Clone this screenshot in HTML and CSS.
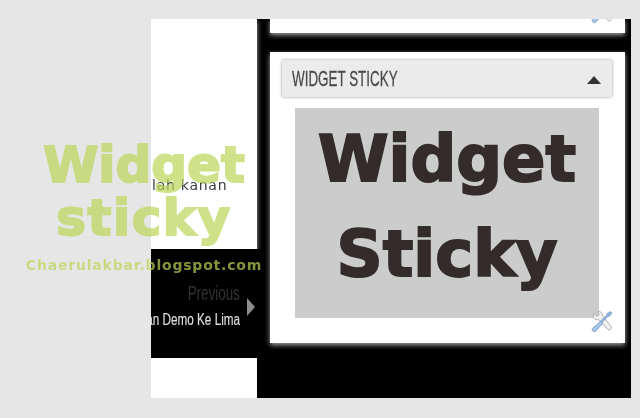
FILE: index.html
```html
<!DOCTYPE html>
<html lang="id">
<head>
<meta charset="utf-8">
<title>Widget sticky</title>
<link rel="stylesheet" href="styles.css">
</head>
<body>
<div class="stage">
  <div class="window">
    <div class="left">
      <div class="left-top"><span class="post-text">lah kanan</span></div>
      <div class="pager">
        <div class="pager-text">
          <div class="pager-line prev"><span>Previous</span></div>
          <div class="pager-line next-title"><span>an Demo Ke Lima</span></div>
        </div>
        <div class="pager-arrow"></div>
      </div>
      <div class="left-bottom"></div>
    </div>
    <div class="right">
      <div class="panel panel-top">
        <svg class="tools tools-top" viewBox="0 0 24 24"><use href="#tool"/></svg>
      </div>
      <div class="panel panel-main">
        <div class="widget-head">
          <span class="widget-title">WIDGET STICKY</span>
          <span class="caret"></span>
        </div>
        <div class="widget-image"><span>Widget</span><span>Sticky</span></div>
        <svg class="tools" viewBox="0 0 24 24">
          <g id="tool">
            <path d="M4 3.5 L7 6.5 L9.5 5 L8 2 C11 1 13.5 3 13 6 L22 17 C23 19 21 21.5 19 20.5 L9 10 C5.500 11 2.500 8 3.500 4.500Z" fill="#f0f0f0" stroke="#a8a8a8" stroke-width="1"/>
            <path d="M21.500 1.500 L23 3 L20.500 6.500 L18.500 7 L12 13.500 L10.500 12 L17 5.500 L18 3.500Z" fill="#8fb2dc" stroke="#7a9dca" stroke-width=".7"/>
            <path d="M11.500 11.500 L13.500 13.500 L6 22 C4.500 23.500 1.500 22 2.500 19.500Z" fill="#a9c5e8" stroke="#7a9dca" stroke-width="1"/>
          </g>
        </svg>
      </div>
    </div>
  </div>
  <div class="watermark">
    <div class="wm-big">Widget</div>
    <div class="wm-big">sticky</div>
    <div class="wm-small">Chaerulakbar.blogspot.com</div>
  </div>
</div>
</body>
</html>
```

FILE: styles.css
```css
html, body {
  margin: 0;
  padding: 0;
  height: 418px;
  overflow: hidden;
  background: #e6e6e6;
}
.stage {
  position: relative;
  width: 640px;
  height: 418px;
  padding: 19px 9px 20px 151px;
  box-sizing: border-box;
  background: #e6e6e6;
  filter: blur(0.5px);
}
.window {
  display: flex;
  width: 480px;
  height: 379px;
  background: #000;
  overflow: hidden;
}
.left {
  width: 106px;
  display: flex;
  flex-direction: column;
  flex: none;
}
.left-top {
  height: 230px;
  background: #fff;
  box-shadow: 0 2px 5px rgba(255,255,255,.7);
  box-sizing: border-box;
  padding-top: 157px;
}
.post-text {
  display: block;
  font: 14px/18px "DejaVu Sans", sans-serif;
  color: #3a3a44;
  white-space: nowrap;
  padding-left: 1px;
  letter-spacing: .75px;
}
.pager {
  width: 119px;
  height: 109px;
  display: flex;
  align-items: flex-start;
  background: #000;
  position: relative;
}
.pager-text {
  width: 89px;
  padding-top: 33px;
  overflow: hidden;
  flex: none;
  font-family: "Liberation Sans", sans-serif;
}
.pager-line {
  display: flex;
  justify-content: flex-end;
  white-space: nowrap;
}
.pager-line span {
  flex: none;
  transform-origin: right center;
}
.prev {
  font-size: 20px;
  line-height: 22px;
  color: #333;
}
.prev span {
  transform: scaleX(.67);
}
.next-title {
  margin-top: 6px;
  font-size: 17px;
  line-height: 20px;
  color: #ddd;
  -webkit-text-stroke: .2px #ddd;
}
.next-title span {
  transform: scaleX(.69);
}
.pager-arrow {
  margin: 49px 0 0 7px;
  width: 0;
  height: 0;
  border-left: 8px solid #8c8c8c;
  border-top: 9px solid transparent;
  border-bottom: 9px solid transparent;
}
.left-bottom {
  height: 40px;
  background: #fff;
}
.right {
  flex: none;
  width: 355px;
  margin-left: 13px;
  display: flex;
  flex-direction: column;
}
.panel {
  background: #fff;
  position: relative;
}
.panel-top {
  height: 14px;
  overflow: hidden;
}
.panel-top, .panel-main {
  box-shadow: 0 2px 5px rgba(255,255,255,.65);
}
.panel-main {
  height: 291px;
  margin-top: 19px;
  padding: 8px 13px 0 12px;
  box-sizing: border-box;
}
.widget-head {
  height: 37px;
  background: #ebebeb;
  box-shadow: 0 0 3px rgba(0,0,0,.45);
  border-radius: 2px;
  display: flex;
  align-items: center;
  justify-content: space-between;
  padding: 0 11px 0 10px;
  box-sizing: border-box;
}
.widget-title {
  display: inline-block;
  font: 22px/1 "Liberation Sans", sans-serif;
  color: #4a4a4a;
  -webkit-text-stroke: .3px #4a4a4a;
  white-space: nowrap;
  transform: scaleX(.61);
  transform-origin: left center;
}
.caret {
  width: 0;
  height: 0;
  margin-top: 3px;
  border-left: 7px solid transparent;
  border-right: 7px solid transparent;
  border-bottom: 8px solid #333;
}
.widget-image {
  width: 304px;
  height: 210px;
  margin: 11px 0 0 13px;
  background: #ccc;
  display: flex;
  flex-direction: column;
  align-items: center;
  font: bold 64px/95px "DejaVu Sans", sans-serif;
  color: #332c2b;
  -webkit-text-stroke: 2px #332c2b;
  padding-top: 4px;
  box-sizing: border-box;
}
.tools {
  position: absolute;
  right: 12px;
  bottom: 10px;
  width: 23px;
  height: 23px;
}
.tools-top {
  bottom: auto;
  top: -18px;
}
.watermark {
  position: absolute;
  z-index: 2;
  left: 0;
  top: 139px;
  width: 288px;
  text-align: center;
  color: rgb(188,214,88);
  opacity: .7;
  font-family: "DejaVu Sans", sans-serif;
  font-weight: bold;
}
.wm-big {
  font-size: 50px;
  line-height: 53px;
  -webkit-text-stroke: 2px rgb(188,214,88);
}
.wm-big + .wm-big {
  letter-spacing: 1.500px;
}
.wm-small {
  margin-top: 10px;
  font-size: 14px;
  line-height: 20px;
  letter-spacing: .8px;
}
```
